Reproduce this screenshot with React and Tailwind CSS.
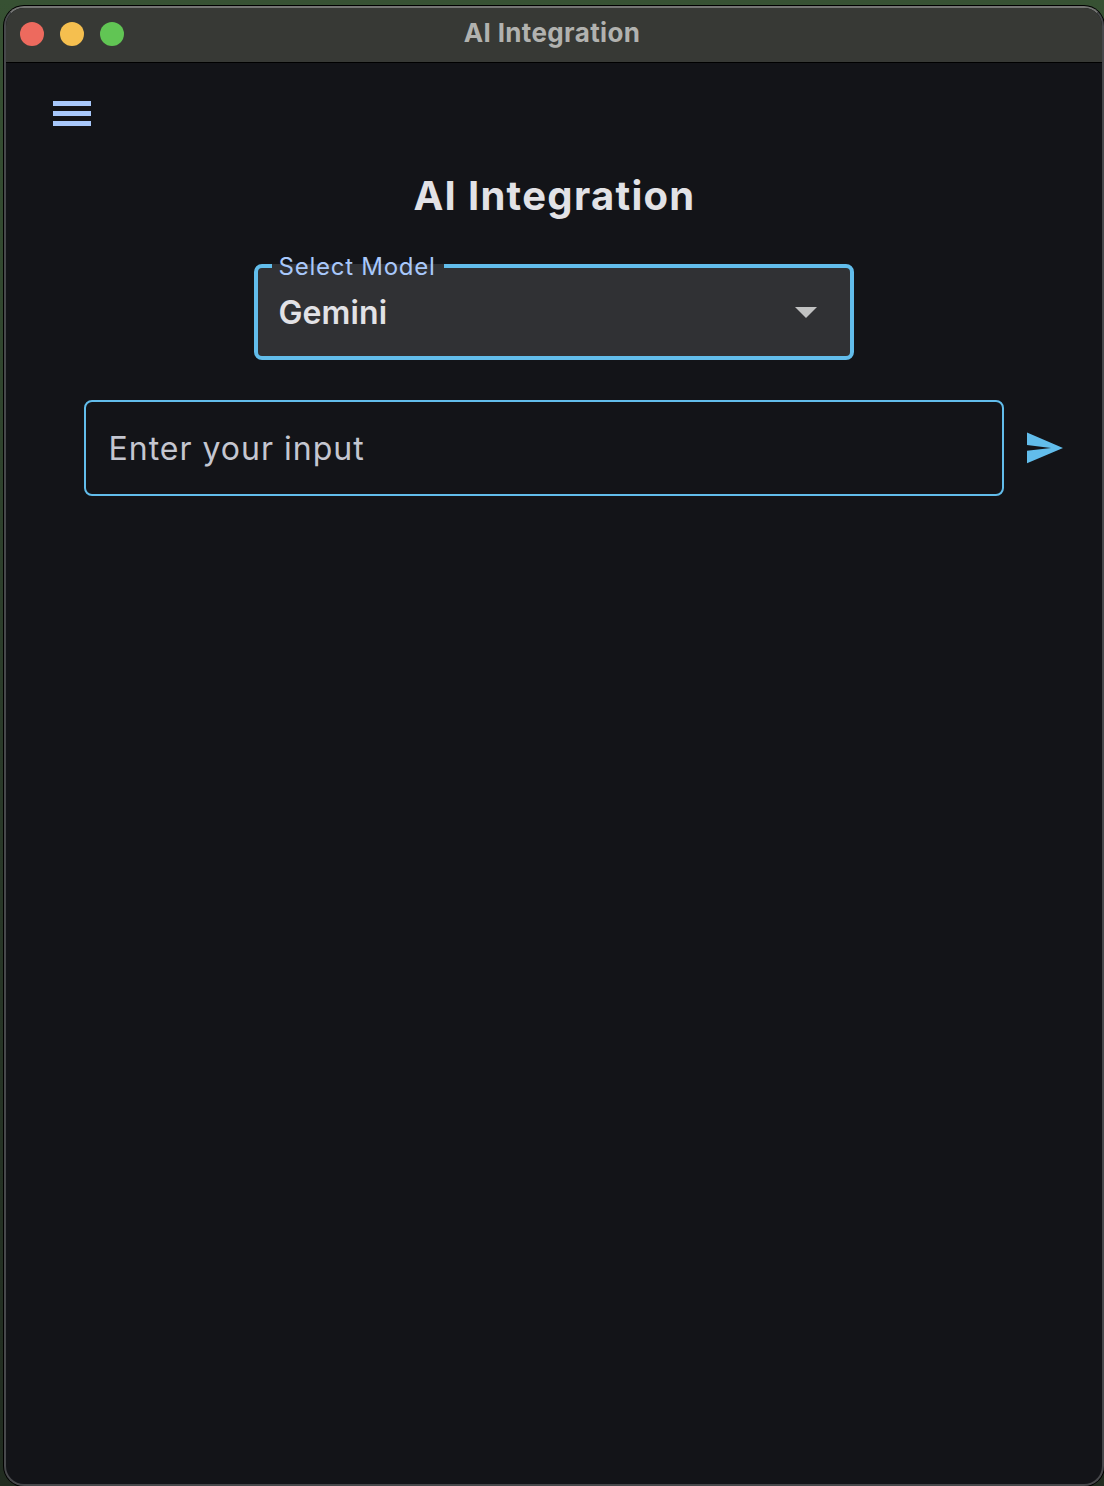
function TitleBar() {
  return (
    <header className="grid h-[55px] shrink-0 grid-cols-[1fr_auto_1fr] items-center border-b border-black bg-[#373935] pb-0.5 pl-[14px]">
      <div className="flex gap-4">
        <span className="size-6 rounded-full bg-[#ed6a5e]" />
        <span className="size-6 rounded-full bg-[#f5bf4f]" />
        <span className="size-6 rounded-full bg-[#61c554]" />
      </div>
      <div className="relative -left-[9px] -top-px whitespace-nowrap text-[26px] font-bold leading-8 tracking-[0.35px] text-[#b1b2af]">
        AI Integration
      </div>
    </header>
  );
}

function ModelSelect() {
  return (
    <div className="relative mt-[38px] flex h-24 w-[600px] items-center justify-between rounded-lg border-4 border-[#62bdeb] bg-[#303134] pl-[20.5px] pr-[33px]">
      <span className="absolute -top-1 left-[14px] h-1 w-[172px] bg-[#303134]" />
      <label className="absolute -top-[15px] left-[20.5px] whitespace-nowrap text-2xl leading-7 tracking-[0.75px] text-[#a8c8fb]">
        Select Model
      </label>
      <span className="mt-0.5 text-[32px] font-semibold leading-10 tracking-[0.1px] text-[#e2e2e6]">Gemini</span>
      <svg className="size-[22px]" viewBox="0 0 22 22" fill="#c1c2c2">
        <path d="M0 6h22L11 17z" />
      </svg>
    </div>
  );
}

export default function App() {
  return (
    <div className="flex h-[1486px] w-[1104px] bg-linear-to-b from-[#375133] via-[#2a3a29] to-[#212c20] pl-1 pt-1.5 font-['Inter',sans-serif]">
      <div className="flex w-[1100px] flex-col overflow-hidden rounded-[20px] border-2 border-[#47484b] border-t-[#747573] bg-[#131418] shadow-[0_0_0_1px_#000]">
        <TitleBar />
        <main className="flex flex-col">
          <button className="ml-[47px] mt-[38px] flex w-[38px] flex-col gap-[5px]" aria-label="Menu">
            <span className="h-[5px] w-full bg-[#a8c8fb]" />
            <span className="h-[5px] w-full bg-[#a8c8fb]" />
            <span className="h-[5px] w-full bg-[#a8c8fb]" />
          </button>
          <div className="flex flex-col items-center">
            <h1 className="mt-[40px] pl-px text-[40px] font-bold leading-[60px] tracking-[1.3px] text-[#e2e2e6]">AI Integration</h1>
            <ModelSelect />
          </div>
          <div className="mt-10 flex items-center pl-[78px]">
            <div className="flex h-24 w-[920px] items-center rounded-lg border-2 border-[#62bdeb] pl-[22.5px]">
              <span className="mt-0.5 text-[32px] leading-10 tracking-[1px] text-[#c4c6d0]">Enter your input</span>
            </div>
            <svg className="ml-[22px] h-[32px] w-[38px]" viewBox="0 0 38 32" fill="#62bdeb">
              <path d="M1 0.5L37 16L1 31.2V18.8L25 16L1 13z" />
            </svg>
          </div>
        </main>
      </div>
    </div>
  );
}
